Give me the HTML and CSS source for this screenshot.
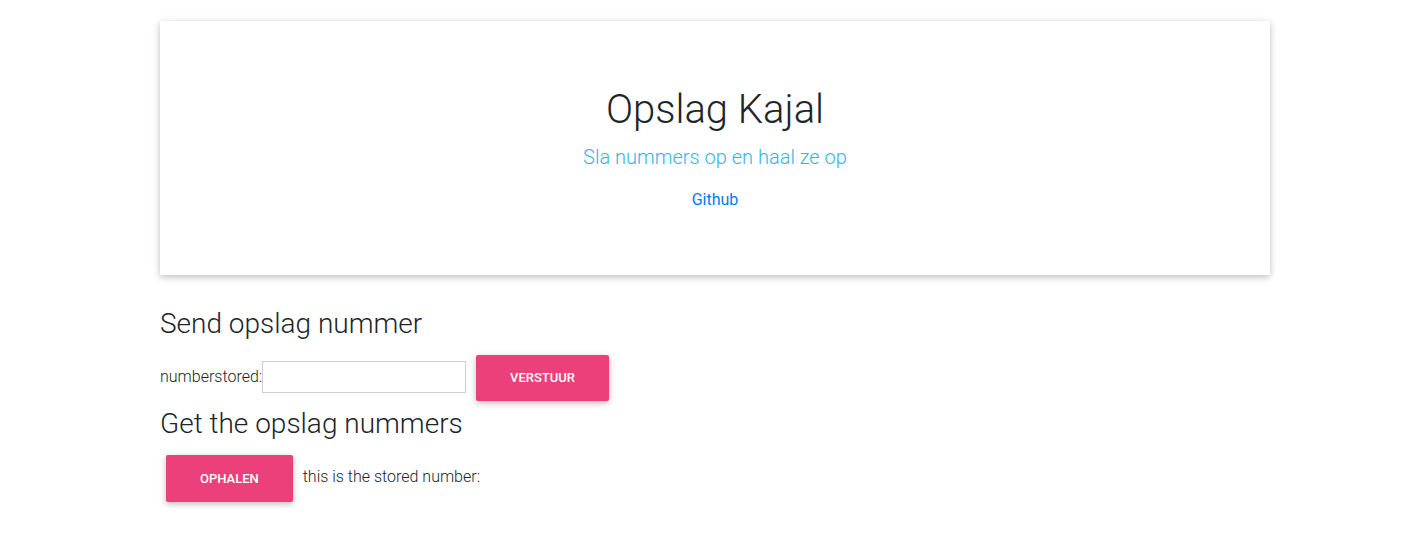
FILE: index.html
```html
<!DOCTYPE html>
<html lang="nl">
<head>
<meta charset="utf-8">
<title>Opslag Kajal</title>
<link rel="stylesheet" href="styles.css">
</head>
<body>
<div class="topbar"></div>
<main class="container">
  <section class="jumbo">
    <h1 class="title">Opslag Kajal</h1>
    <p class="lead">Sla nummers op en haal ze op</p>
    <a class="gh" href="#">Github</a>
  </section>
  <h3 class="section-title">Send opslag nummer</h3>
  <div class="row"><label class="lbl" for="num">numberstored:</label><input id="num" class="field" type="text"> <button class="btn">Verstuur</button></div>
  <h3 class="section-title section-title--get">Get the opslag nummers</h3>
  <div class="row"><button class="btn">Ophalen</button> <span class="lbl">this is the stored number:</span></div>
</main>
</body>
</html>
```
FILE: styles.css
```css
html, body {
  margin: 0;
  padding: 0;
  background: #fff;
}
body {
  font-family: Roboto, "Liberation Sans", sans-serif;
  font-weight: 300;
  font-size: 16px;
  line-height: 1.5;
  color: #212529;
}
.topbar {
  height: 0;
  box-shadow: 0 2px 5px 0 rgba(0,0,0,.16), 0 2px 10px 0 rgba(0,0,0,.12);
}
.container {
  width: 1110px;
  margin: 0 auto;
  padding-left: 3px;
  padding-top: 21px;
}
.jumbo {
  background: #fff;
  padding: 65px 32px 63px;
  margin-bottom: 32px;
  text-align: center;
  box-shadow: 0 2px 5px 0 rgba(0,0,0,.16), 0 2px 10px 0 rgba(0,0,0,.12);
}
.title {
  font-size: 40px;
  font-weight: 300;
  line-height: 1.2;
  margin: 0 0 8px;
}
.lead {
  font-size: 20px;
  font-weight: 300;
  color: #33b5e5;
  margin: 0 0 16px;
  line-height: 1.5;
}
.gh {
  color: #007bff;
  text-decoration: none;
  font-weight: 400;
  font-size: 16px;
}
.section-title {
  font-size: 28px;
  font-weight: 300;
  line-height: 1.2;
  margin: 0 0 8px;
}
.section-title--get {
  margin-bottom: 9px;
}
.row {
  line-height: 1.5;
}
.lbl {
  font-size: 16px;
  font-weight: 300;
}
.field {
  width: 204px;
  height: 32px;
  box-sizing: border-box;
  border: 1px solid #cfcfcf;
  padding: 2px 4px;
  font-family: Roboto, "Liberation Sans", sans-serif;
  font-size: 14px;
  vertical-align: baseline;
  margin: 0;
}
.btn {
  font-family: Roboto, "Liberation Sans", sans-serif;
  font-size: 13px;
  font-weight: 500;
  line-height: 19.5px;
  text-transform: uppercase;
  color: #fff;
  background: #ec407a;
  border: 0;
  border-radius: 2px;
  padding: 13.4px 34px;
  margin: 6px;
  box-shadow: 0 2px 5px 0 rgba(0,0,0,.16), 0 2px 10px 0 rgba(0,0,0,.12);
  cursor: pointer;
}
```
